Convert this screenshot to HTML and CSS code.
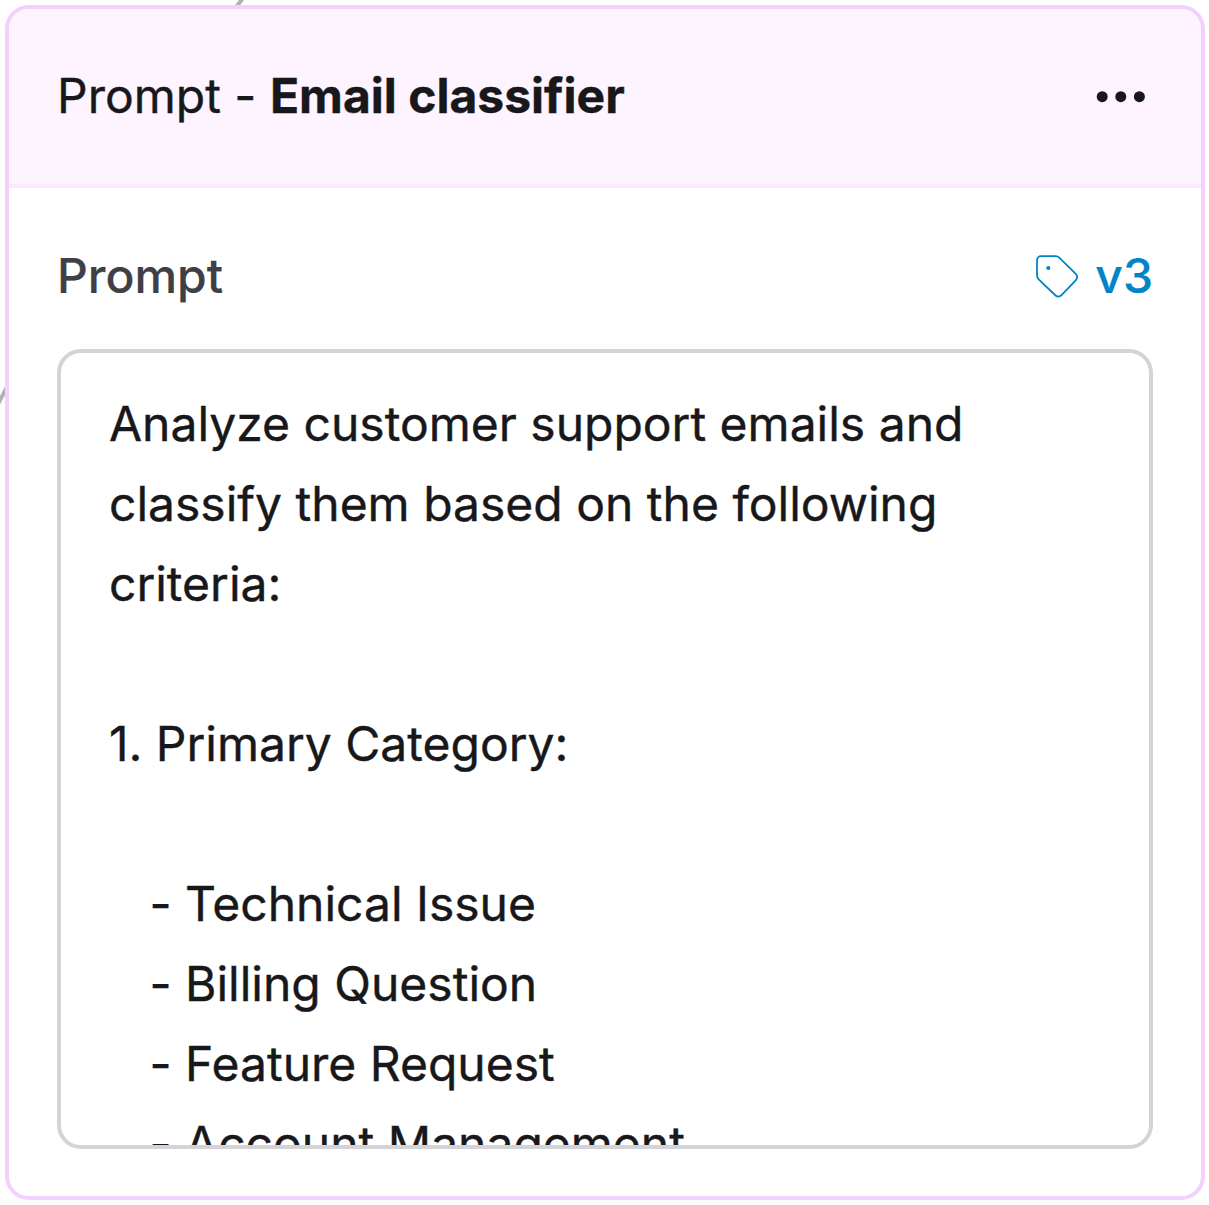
FILE: index.html
```html
<!DOCTYPE html>
<html lang="en">
<head>
<meta charset="utf-8">
<title>Prompt - Email classifier</title>
<link rel="stylesheet" href="styles.css">
</head>
<body>
<svg class="edges" viewBox="0 0 1209 1205" aria-hidden="true"><path d="M243 -2L237 6M8 385L-3 406"/></svg>
<article class="node">
  <header class="node-header">
    <h1 class="title">Prompt - <strong>Email classifier</strong></h1>
    <svg class="more" viewBox="0 0 50 12" aria-label="More"><circle cx="6.200" cy="5.700" r="5.500"/><circle cx="24.800" cy="5.700" r="5.500"/><circle cx="43.400" cy="5.700" r="5.500"/></svg>
  </header>
  <section class="node-body">
    <div class="field-head">
      <span class="label">Prompt</span>
      <span class="version"><svg class="tag" viewBox="0 -0.5 44 44"><path d="M6.300 1.700H20.500Q22.800 1.700 24.500 3.400L40.500 19.200Q43.700 22.400 40.700 25.800L26.800 40.300Q23.500 43.800 20 40.500L3.700 24.800Q2 23 2 20.500V6Q2 1.700 6.300 1.700Z"/><circle cx="13.300" cy="13.500" r="2.100"/></svg>v3</span>
    </div>
    <div class="prompt">Analyze customer support emails and classify them based on the following criteria:

1. Primary Category:

   - Technical Issue
   - Billing Question
   - Feature Request
   - Account Management</div>
  </section>
</article>
</body>
</html>
```
FILE: styles.css
```css
* { box-sizing: border-box; }
body {
  margin: 0;
  padding: 5px 4px 5px 5px;
  height: 1205px;
  overflow: hidden;
  background: #fff;
  color: #18181b;
  font: 400 48px/80px Inter, sans-serif;
  -webkit-text-stroke: 0.4px;
}
.edges { position: absolute; inset: 0; width: 1209px; height: 1205px; fill: none; stroke: #b1b1b7; stroke-width: 4; }
.node {
  position: relative;
  height: 1195px;
  border: 4px solid #f3d0fe;
  border-radius: 24px;
  background: #fff;
  overflow: hidden;
}
.node-header {
  display: flex;
  justify-content: space-between;
  align-items: center;
  height: 179px;
  padding: 0 55px 0 48px;
  background: #fdf4ff;
  border-bottom: 4px solid #fae8ff;
}
.title { margin: 0; padding-bottom: 2px; font: inherit; }
.title strong { font-weight: 700; }
.more { width: 50px; height: 12px; fill: #18181b; }
.node-body { padding: 48px 48px 0; }
.field-head { display: flex; justify-content: space-between; align-items: center; height: 80px; -webkit-text-stroke: 0.2px; }
.label { font-weight: 500; color: #3f3f46; }
.version { display: flex; align-items: center; gap: 16px; font-weight: 500; color: #0284c7; }
.tag { width: 44px; height: 44px; fill: none; stroke: #0284c7; stroke-width: 1.8; }
.tag circle { fill: #0284c7; stroke: none; }
.prompt {
  margin-top: 33px;
  height: 800px;
  padding: 31px 48px 0;
  border: 4px solid #d4d4d8;
  border-radius: 24px;
  overflow: hidden;
  white-space: pre-wrap;
  font-variant-ligatures: no-contextual;
}
```
